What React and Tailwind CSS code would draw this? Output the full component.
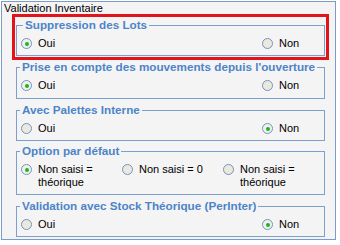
import React from "react"

const Radio = ({ checked }) => (
  <span
    className={
      "flex h-[11px] w-[11px] shrink-0 items-center justify-center rounded-full border border-[#7493c6] " +
      (checked ? "bg-[#f1f1ec]" : "bg-[#ebe8dc]")
    }
  >
    {checked && <span className="h-[4px] w-[4px] rounded-full bg-[#1fb51f]" />}
  </span>
)

const Option = ({ checked, children }) => (
  <label className="flex items-start gap-[6px]">
    <span className="flex h-[13px] items-center">
      <Radio checked={checked} />
    </span>
    <span className="leading-[13px]">{children}</span>
  </label>
)

const GroupBox = ({ title, className = "", legendClass = "ml-[3px]", children }) => (
  <fieldset className={"w-[309px] border border-[#7aa0d2] " + className}>
    <legend
      className={
        "px-[2px] text-[11.7px] leading-[14px] font-bold text-[#4d84c9] " + legendClass
      }
    >
      {title}
    </legend>
    {children}
  </fieldset>
)

const YesNo = ({ yes }) => (
  <div className="mt-[5px] grid grid-cols-[241px_auto] pl-[4px]">
    <Option checked={yes}>Oui</Option>
    <Option checked={!yes}>Non</Option>
  </div>
)

export default function App() {
  return (
    <div className="min-h-[245px] bg-white font-['Liberation_Sans',Arial,sans-serif] text-[11px] text-black">
      <div className="ml-px mt-px h-[239px] w-[335px] border border-[#7d9bc8] bg-[#f4f4f4]">
        <div className="h-[12px] pl-[2px] leading-[12px]">Validation Inventaire</div>

        <div className="ml-[10px] h-[46px] w-[317px] border-[3px] border-[#e3131b]">
          <GroupBox title="Suppression des Lots" className="ml-px mt-px h-[38px]" legendClass="ml-[6px]">
            <YesNo yes />
          </GroupBox>
        </div>

        <GroupBox title="Prise en compte des mouvements depuis l'ouverture" className="ml-[14px] h-[39px]">
          <YesNo yes />
        </GroupBox>

        <GroupBox title="Avec Palettes Interne" className="ml-[14px] mt-[4px] h-[38px]">
          <YesNo yes={false} />
        </GroupBox>

        <GroupBox title="Option par défaut" className="ml-[14px] mt-[3px] h-[51px]">
          <div className="mt-[5px] grid grid-cols-[101px_101px_auto] pl-[4px]">
            <Option checked>
              <span className="block w-[70px]">Non saisi = théorique</span>
            </Option>
            <Option>Non saisi = 0</Option>
            <Option>
              <span className="block w-[70px]">Non saisi = théorique</span>
            </Option>
          </div>
        </GroupBox>

        <GroupBox title="Validation avec Stock Théorique (PerInter)" className="ml-[14px] mt-[4px] h-[38px]">
          <YesNo yes={false} />
        </GroupBox>
      </div>
    </div>
  )
}
